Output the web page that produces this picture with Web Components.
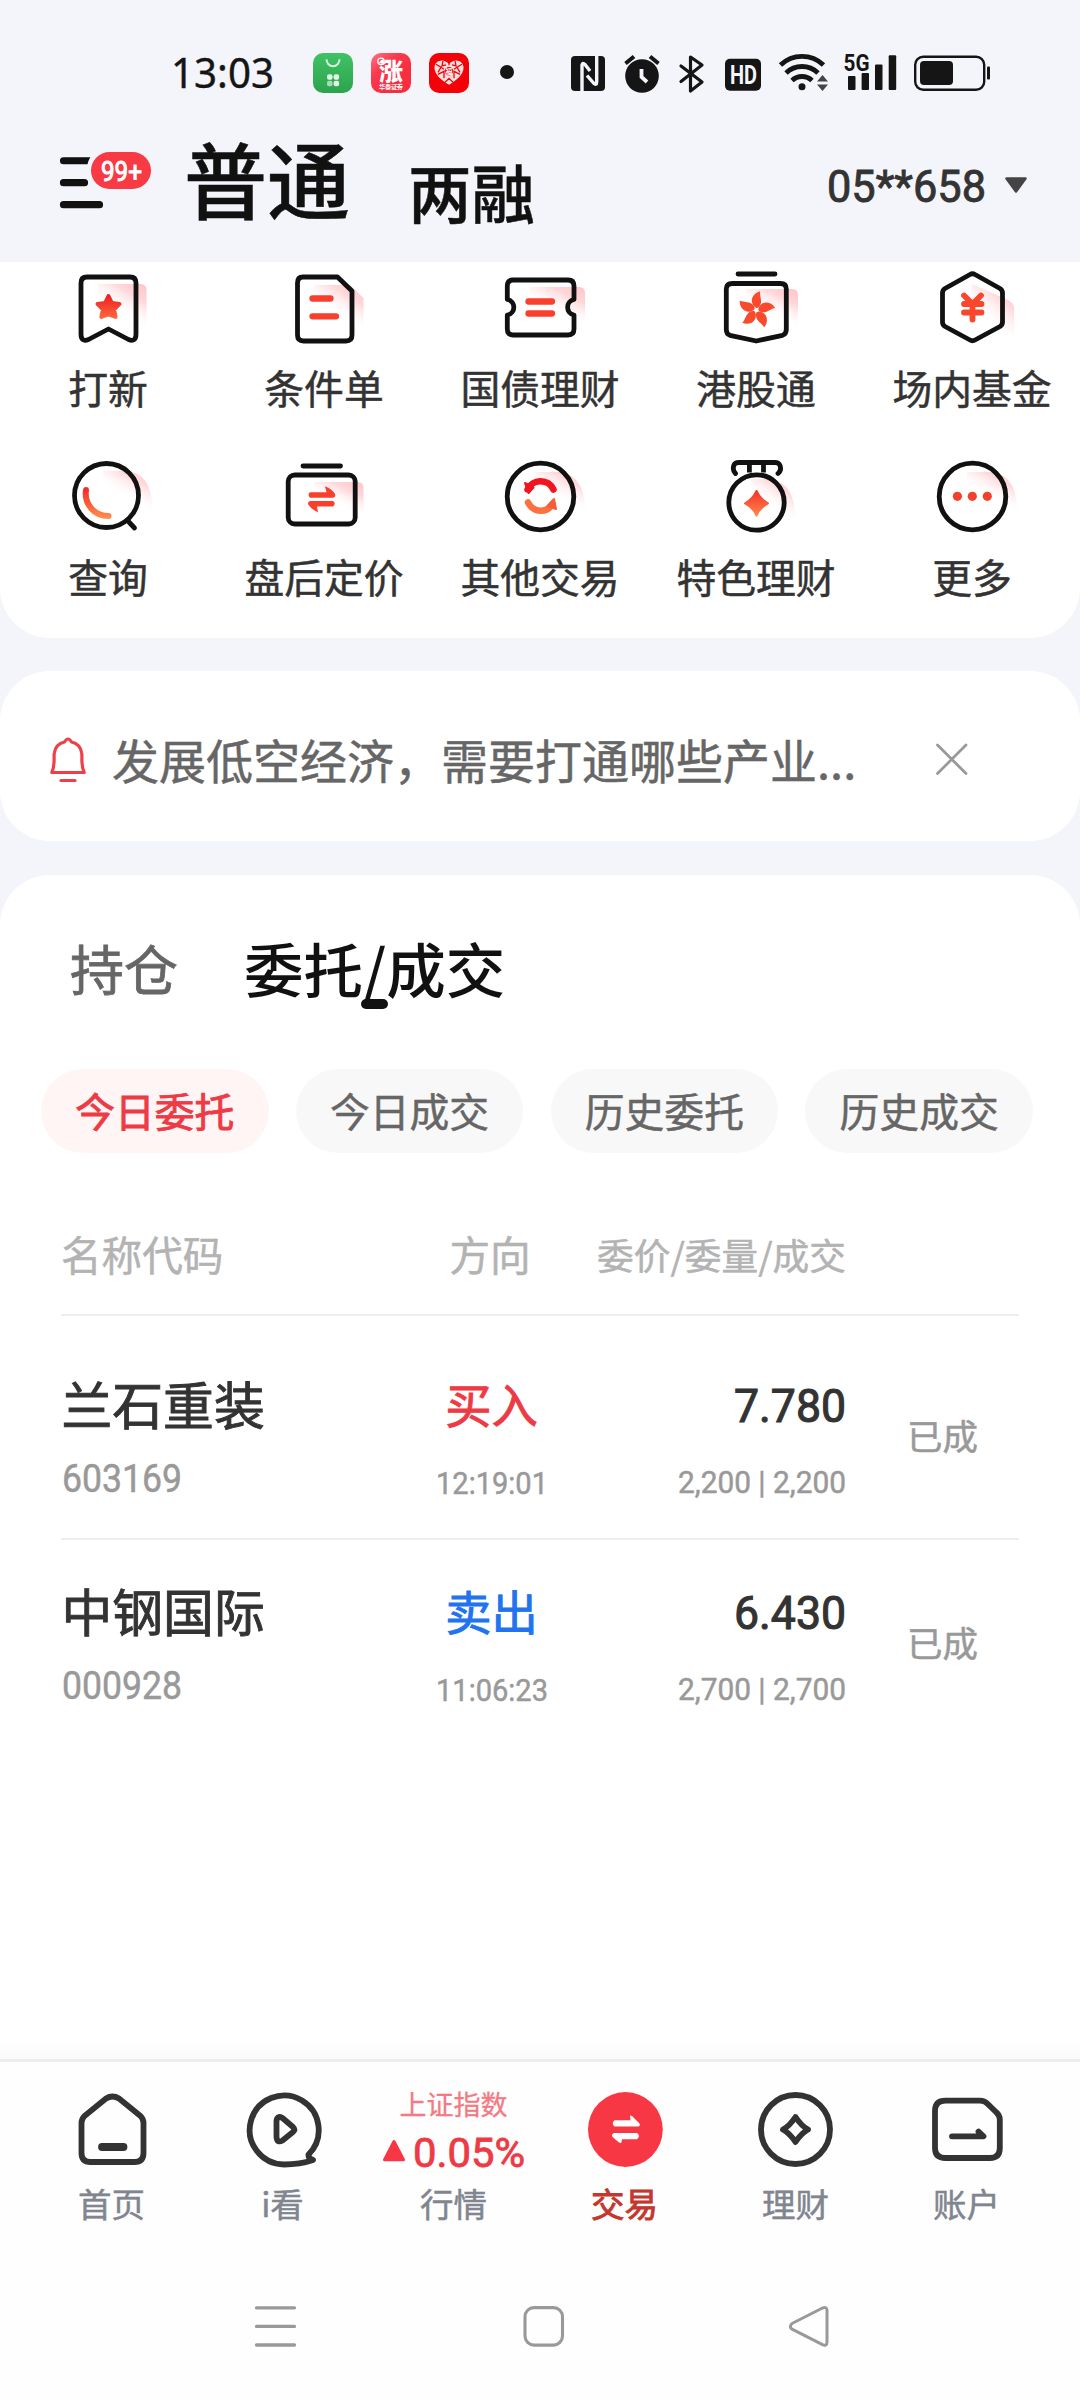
<!DOCTYPE html>
<html lang="zh-CN">
<head>
<meta charset="utf-8">
<title>交易</title>
<style>
html,body{margin:0;padding:0;background:#fff}
body{width:1080px;height:2400px;overflow:hidden;font-family:"Noto Sans CJK SC",sans-serif;color:#333}
</style>
</head>
<body>
<trade-app></trade-app>
<script>
const K = '#111';
const RED = 'url(#r)';
const defs = `<defs>
<linearGradient id="r" x1="0" y1="28" x2="0" y2="66" gradientUnits="userSpaceOnUse"><stop offset="0" stop-color="#ef0b1c"/><stop offset="1" stop-color="#ff8a4a"/></linearGradient>
<linearGradient id="s" x1="1" y1="0" x2=".3" y2="1"><stop offset="0" stop-color="#ffc3c7"/><stop offset=".3" stop-color="#ffd3d6" stop-opacity=".9"/><stop offset=".72" stop-color="#fff" stop-opacity="0"/></linearGradient></defs>`;
const line = (b, w = 4.8, c = K) => `<g fill="none" stroke="${c}" stroke-width="${w}" stroke-linecap="round" stroke-linejoin="round">${b}</g>`;
const shade = (x, y, x2, h, r = 6) => `<path fill="url(#s)" d="M40 ${y}H${x2 - r}Q${x2} ${y} ${x2} ${y + r}V${y + h}H40Z"/>`;
const petal = [0,72,144,216,288].map(a => `<path transform="rotate(${a + 8} 50.3 48)" d="M50 46C42 42.500 43 32.500 51.500 29C51 33.500 57 40 51.700 45.500Z"/>`).join('');

/* name: [x, y, width, height, markup] */
const ICONS = {
  mall: [313,52.7,40,40,`<defs><linearGradient id="g" x1="0" y1="0" x2="0" y2="1"><stop offset="0" stop-color="#41c265"/><stop offset="1" stop-color="#2ba44d"/></linearGradient></defs><rect x="313" y="52.7" width="40" height="40" rx="10" fill="url(#g)"/><path d="M326.500 59a6.500 7 0 0 0 13 0" fill="none" stroke="#d3f5dc" stroke-width="2"/><g fill="#e4f8e8"><rect x="327" y="74" width="5.5" height="5.5" rx="2"/><rect x="333.600" y="74" width="5.500" height="5.500" rx="2"/><rect x="327" y="80.500" width="5.500" height="5.500" rx="2" opacity=".65"/><rect x="333.600" y="80.500" width="5.500" height="5.500" rx="2"/></g>`],
  rise: [371,52.7,40,40,`<defs><linearGradient id="g" x1="0" y1="0" x2=".6" y2=".7"><stop offset="0" stop-color="#ff7484"/><stop offset=".5" stop-color="#f93a4d"/><stop offset="1" stop-color="#f72e40"/></linearGradient></defs><rect x="371" y="52.700" width="40" height="40" rx="10" fill="url(#g)"/><text x="379" y="79.500" font-size="24" font-weight="900" fill="#fff">涨</text><circle cx="381" cy="61" r="3.200" fill="none" stroke="#fff" stroke-width="1.400"/><path d="M379.500 62.500l3-3" stroke="#fff" stroke-width="1.200"/><text x="379" y="89" font-size="6.200" font-weight="700" fill="#fff" textLength="24">华泰证券</text>`],
  heart: [429,52.7,40,40,`<rect x="429" y="52.700" width="40" height="40" rx="10" fill="#f40009"/><path d="M449 84.500C441 80 434.500 74 434.500 67.500C434.500 60 444 57.500 449 64C454 57.500 463.500 60 463.500 67.500C463.500 74 457 80 449 84.500Z" fill="#ffe1df"/><path d="M436 64l5 3-3 5M443 60.500l-1 5 4-1M438 74l6-3v7M462 64l-5 3 3 5M455 60.500l1 5-4-1M460 74l-6-3v7M445 82l4-4 4 4M449 65v-2M441 67l3 2M457 67l-3 2" stroke="#f40009" stroke-width="1.300" fill="none"/><circle cx="449" cy="71" r="4.200" fill="#f40009"/><text x="449" y="73.700" font-size="7" font-weight="700" text-anchor="middle" fill="#fff">福</text>`],
  nfc: [571,52,34,41,`<rect x="571" y="56" width="34" height="35" rx="4" fill="#151515"/><g stroke="#f4f5fa" stroke-width="3.400" fill="none" stroke-linejoin="round"><path d="M582 91V65Q582.500 62 585 64.500L590 71"/><path d="M587 75.500L593.500 83Q596.700 86 596.700 82V56"/></g>`],
  alarm: [624,52,36,42,`<circle cx="642" cy="76" r="16.800" fill="#151515"/><path d="M625.500 63.500l8.500-7M658.500 63.500l-8.500-7" stroke="#151515" stroke-width="4" fill="none"/><path d="M641.500 69v8l5.500 5" stroke="#f4f5fa" stroke-width="3.800" fill="none"/>`],
  bt: [679,52,26,42,`<path d="M681 66l21 16-11.500 9V57L702 65 681 81.500" fill="none" stroke="#151515" stroke-width="3.200" stroke-linecap="round" stroke-linejoin="round"/>`],
  hd: [725,52,37,42,`<rect x="725" y="58.800" width="36" height="32" rx="5" fill="#151515"/><text x="730" y="84" font-family="Roboto" font-weight="700" font-size="25.500" textLength="27" lengthAdjust="spacingAndGlyphs" fill="#f4f5fa">HD</text>`],
  wifi: [778,51,52,42,`<g fill="none" stroke="#151515" stroke-width="4.800"><path d="M780.500 65a31 31 0 0 1 43 0"/><path d="M786 73a23 23 0 0 1 32 0"/><path d="M792 80.500a14.500 14.500 0 0 1 20 0"/></g><circle cx="802" cy="86.700" r="3.500" fill="#151515"/><path d="M817 81.500h11l-5.500-6.500zM817 84.500h11l-5.500 6.500z" fill="#444"/>`],
  cell: [843,51,55,42,`<text x="843.500" y="70.500" font-family="Roboto" font-weight="700" font-size="24.500" textLength="26" lengthAdjust="spacingAndGlyphs" fill="#151515">5G</text><g fill="#151515"><rect x="848" y="76" width="7.500" height="14" rx="1"/><rect x="861.600" y="73" width="7.400" height="17" rx="1"/><rect x="875" y="64.500" width="7.500" height="25.500" rx="1"/><rect x="888.700" y="55.300" width="7.500" height="34.700" rx="1"/></g>`],
  battery: [914,52,77,42,`<rect x="915.200" y="56.700" width="69" height="33" rx="8" fill="none" stroke="#151515" stroke-width="2.400"/><rect x="920" y="61" width="33" height="24" rx="4" fill="#151515"/><rect x="987" y="66.500" width="3" height="13" rx="1" fill="#151515"/>`],
  burger: [58,150,50,64,line('<path d="M63.500 182.700H84.500M63.500 204.700H99.500"/>',7.2)+`<path fill="#111" d="M63.500 157.200H90.300Q88.300 160.500 87.500 164.300H63.500A3.500 3.500 0 0 1 63.500 157.200Z"/>`],
  caret: [1005,177,22,17,`<path d="M1006.500 178.500H1025.500L1016 191.500Z" fill="#444" stroke="#444" stroke-width="2.500" stroke-linejoin="round"/>`],

  ipo: [0,0,100,90,defs+shade(40,22,88.5,44)+line('<path d="M29 15H72Q78 15 78 21V72Q78 80.500 70.500 77.500L50.500 67 30.500 77.500Q23 80.500 23 72V21Q23 15 29 15Z"/>')+`<path fill="${RED}" stroke="${RED}" stroke-width="4" stroke-linejoin="round" d="M50.500 34l3.400 7 7.600.900-5.500 5.600 1.600 7.500-7.100-2.700-7.100 2.700 1.600-7.500-5.500-5.600 7.600-.900z"/>`],
  cond: [0,0,100,90,defs+`<path fill="url(#s)" d="M40 23H76L89.500 36V68H40Z"/>`+line('<path d="M29 15H63.500L78 29V73Q78 79 72 79H29.500Q23.500 79 23.500 73V21Q23.500 15 29 15Z"/>')+line('<path d="M38.500 36.500H56.500M38.500 54.300H62"/>',6.3,'#f8402d')],
  bond: [0,0,100,90,defs+shade(40,25,95,38)+line('<path d="M23 18H78Q84 18 84 24V37.500C75.500 39 75.500 51.500 84 53V67Q84 73 78 73H23Q17.300 73 17.300 67V53C26 51.500 26 39 17.300 37.500V24Q17.300 18 23 18Z"/>')+line('<path d="M38.500 39.500H62M38.500 51.500H62"/>',6.3,'#f8402d')],
  hk: [0,0,100,90,defs+shade(40,27,92,38)+line('<path d="M32 12H69M26.500 21.500H74.500Q80.300 21.500 80.300 27V67.500Q80.300 72 76.500 73.300L50.300 79 24 73.300Q20.300 72 20.300 67.500V27Q20.300 21.500 26.500 21.500Z"/>')+`<g fill="#fa4a2e">${petal}</g>`],
  fund: [0,0,100,90,defs+`<path fill="url(#s)" d="M50 22L86 38Q92 41 92 46V80H45Z"/>`+line('<path d="M48 12.500Q50.500 11 53 12.500L78 26.500Q80.500 28 80.500 31V60Q80.500 63 78 64.500L53 78Q50.500 79.500 48 78L23 64.500Q20.500 63 20.500 60V31Q20.500 28 23 26.500Z"/>')+line('<path d="M42 33.500L50.500 42 59 33.500M42 42H59.500M42 50.500H59.500M50.500 42V57.500"/>',5.8,'#f9472e')],
  query: [0,0,100,90,defs+`<path fill="url(#s)" d="M60 20Q94.500 16 94.500 60H45V20Z"/>`+line('<circle cx="48.500" cy="44.500" r="32"/><path d="M69.500 69.500L76.500 77"/>')+`<path d="M28 39C26 53 36 65 50.500 65" stroke="${RED}" fill="none" stroke-width="6" stroke-linecap="round"/>`],
  after: [0,0,100,90,defs+shade(40,31,89.5,34)+line('<path d="M29 15H66.500"/><rect x="14.200" y="24" width="67" height="49" rx="6.500"/>')+`<path fill="#f8402d" d="M36 41.300H52.500L51 35.300Q58 38 61 43Q62 46.300 59 46.700H36Q33 44 36 41.300ZM59 50H36Q33 51 34.500 54Q38 58.500 44 61.500L43 55.400H59Q62.500 52.500 59 50Z"/>`],
  other: [0,0,100,90,defs+`<path fill="url(#s)" d="M60 21Q95 18 95 60H45V21Z"/>`+line('<circle cx="50.500" cy="45.500" r="33.300"/>')+`<g fill="none" stroke-width="6.500"><path stroke="#f21420" stroke-linecap="round" d="M37.500 38.500C42 28 58 27 63.500 38.500"/><path stroke="#fd7040" stroke-linecap="round" d="M38 51.500C43.500 62 57 62.500 62.500 53"/></g><path fill="#f21420" stroke="#f21420" stroke-width="2" stroke-linejoin="round" d="M35 32L38.500 42 43.500 36.500Z"/><path fill="#fa5c38" stroke="#fa5c38" stroke-width="2" stroke-linejoin="round" d="M66 58L64 48 57.500 55Z"/>`],
  wealth: [0,0,100,90,defs+`<path fill="url(#s)" d="M60 28Q89.500 28 89.500 70H45V28Z"/>`+line('<circle cx="50.500" cy="51.500" r="27.700"/><path d="M29.500 22.500Q26 19 28 14Q29 11.500 33 11.500H69Q72.500 11.500 73.800 14Q76 19 72 22.500"/><path stroke-linecap="butt" d="M43.400 12V21.500M57.500 12V21.500"/>')+`<path fill="${RED}" stroke="${RED}" stroke-width="2" stroke-linejoin="round" d="M50.500 40Q54 48 62 52.300Q54 56.500 50.500 64.500Q47 56.500 39 52.300Q47 48 50.500 40Z"/>`],
  more: [0,0,100,90,defs+`<path fill="url(#s)" d="M60 21Q95 18 95 60H45V21Z"/>`+line('<circle cx="50.500" cy="45.500" r="33.300"/>')+`<g fill="#f5402b"><circle cx="35.400" cy="45.300" r="4.600"/><circle cx="50.300" cy="45.300" r="4.600"/><circle cx="65.300" cy="45.300" r="4.600"/></g>`],

  bell: [48,734,42,52,line('<path d="M51.800 773.500C55.500 766 53.500 758 54.300 754C55.500 747 60 744 64.500 743Q68 737 71.500 743C76 744 80.500 747 81.700 754C82.500 758 80.500 766 84.200 773.500Z"/><path d="M61 781.500H75"/>',3.2,'#ee4049')],
  close: [933,743,36,34,line('<path d="M936.500 746L965 774.500M965 746L936.500 774.500"/>',2.8,'#999')],

  home: [72,2088,80,84,line('<path d="M106 2098.500Q112.500 2094.500 119 2098.500L140.500 2116Q143.500 2119 143.500 2123V2153Q143.500 2162 134.500 2162H90.500Q81.500 2162 81.500 2153V2123Q81.500 2119 84.500 2116Z"/>',5.800,'#333')+line('<path d="M102 2147H123.500"/>',7.8,'#333')],
  look: [243,2088,80,84,line('<path d="M284 2164.500A34.500 34.500 0 1 1 308.500 2154.500Q308 2158 313 2160Q300 2164.500 284 2164.500Z"/><path d="M276.500 2121V2137Q277 2143.500 282.500 2140.500L293 2132Q295.500 2129.500 293 2127L282.500 2118Q277 2115 276.500 2121Z"/>',5.800,'#333')],
  up: [384,2140,22,21.5,`<path d="M395 2141.500L404.500 2159.800H385.500Z" fill="#f73844" stroke="#f73844" stroke-width="3" stroke-linejoin="round"/>`],
  trade: [585,2088,80,84,`<circle cx="625.400" cy="2129.500" r="37.400" fill="#f73744"/><path fill="#fff" d="M614.500 2120.300H630.500L630 2116Q630.500 2115 632 2116L639.500 2123.500Q640.500 2126.500 638 2126.500H614.500Q611 2123.500 614.500 2120.300ZM637 2133H614Q611 2134 612.500 2137L619 2142.500Q621.500 2143.500 621.500 2142L622 2139.200H637Q641 2136 637 2133Z"/>`],
  money: [757,2088,80,84,line('<circle cx="796.500" cy="2129.500" r="34.500"/><path d="M796.500 2117Q802.500 2126 809 2129.500Q802.500 2133 796.500 2142Q790.500 2133 784 2129.500Q790.500 2126 796.500 2117Z"/>',5.800,'#333')],
  account: [927,2088,80,84,line('<path d="M945.500 2100.700H980Q984.500 2100.700 987.500 2103.700L996.500 2112.500Q999.800 2115.500 999.800 2119.500V2148Q999.800 2158 990 2158H945.500Q935 2158 935 2148V2111Q935 2100.700 945.500 2100.700Z"/><path d="M952 2136.300H982L978.500 2131.500 983.500 2136.300Z"/>',5.800,'#333')],
  recent: [255,2304,41,43,line('<path d="M256.500 2306.800H294.500M256.500 2325.400H294.500M256.500 2344H294.500"/>',3.300,'#999')],
  square: [522,2304,44,43,line('<rect x="525" y="2306.600" width="37.500" height="37.500" rx="9"/>',3.100,'#999')],
  back: [788,2303,42,45,line('<path d="M792 2322.500L822.500 2307Q827 2305.300 827 2309.500V2341Q827 2345.500 822.500 2343.700L792 2328.200Q788.800 2325.500 792 2322.500Z"/>',3,'#999')]
};

function define(name, render) {
  customElements.define(name, class extends HTMLElement {
    connectedCallback() {
      if (!this.shadowRoot) this.attachShadow({mode: 'open'}).innerHTML = render(this);
    }
  });
}

define('ui-icon', el => {
  const [x, y, w, h, body] = ICONS[el.getAttribute('name')];
  return `<style>:host{display:block;flex:none;width:${w}px;height:${h}px;-webkit-text-stroke:0}svg{display:block;overflow:visible}</style>
  <svg width="${w}" height="${h}" viewBox="${x} ${y} ${w} ${h}">${body}</svg>`;
});

/* Narrow numeral text; the box is as tall as its capitals. */
define('num-text', el => {
  const w = +el.getAttribute('w'), c = +el.getAttribute('cap');
  return `<style>:host{display:block;flex:none;width:${w}px;height:${c}px;-webkit-text-stroke:0}svg{display:block;overflow:visible}
  text{font-family:${el.getAttribute('face') || 'Roboto'},sans-serif;fill:currentColor;stroke:currentColor;stroke-width:var(--bold,.5px);font-weight:400}</style>
  <svg width="${w}" height="${c}"><text x="0" y="${c}" font-size="${c / .711}" textLength="${w}" lengthAdjust="spacingAndGlyphs">${el.getAttribute('text')}</text></svg>`;
});

define('status-bar', () => `<style>
:host{display:flex;height:100px;box-sizing:border-box;padding:52px 0 0 171px;color:#151515;align-items:flex-start}
num-text{margin:5.500px 39px 0 0;--bold:.4px}
.apps{display:flex;gap:18px;padding-top:.7px}
.dot{width:14px;height:14px;border-radius:7px;background:#151515;margin:13px 57px 0 31px}
.sys{display:flex}
</style>
<num-text text="13:03" w="103" cap="30" face="'Noto Sans'"></num-text>
<div class="apps"><ui-icon name="mall"></ui-icon><ui-icon name="rise"></ui-icon><ui-icon name="heart"></ui-icon></div>
<div class="dot"></div>
<div class="sys"><ui-icon name="nfc"></ui-icon><ui-icon name="alarm" style="margin-left:19px"></ui-icon><ui-icon name="bt" style="margin-left:19px"></ui-icon><ui-icon name="hd" style="margin-left:20px"></ui-icon><ui-icon name="wifi" style="margin:-1px 0 0 16px"></ui-icon><ui-icon name="cell" style="margin:-1px 0 0 13px"></ui-icon><ui-icon name="battery" style="margin-left:16px"></ui-icon></div>`);

define('app-header', () => `<style>
:host{display:flex;height:162px;box-sizing:border-box;padding-left:58px;color:#111}
.menu{position:relative;margin-top:50px;width:126px;flex:none}
.badge{position:absolute;left:33px;top:2px;width:60px;height:37px;border-radius:18.500px;background:#f73a44;color:#fff;display:flex;align-items:center;justify-content:center;--bold:1px}
.a{font-size:83px;line-height:100px;font-weight:500;margin-top:27px;width:224px}
.b{font-size:63.500px;line-height:80px;font-weight:500;margin-top:50px;width:419px}
.acct{display:flex;color:#333;gap:19px;margin-top:69.500px;--bold:.9px}
.acct ui-icon{margin-top:7px}
</style>
<div class="menu"><ui-icon name="burger"></ui-icon><div class="badge"><num-text text="99+" w="41" cap="19.5"></num-text></div></div>
<div class="a">普通</div><div class="b">两融</div>
<div class="acct"><num-text text="05**658" w="159" cap="31.5"></num-text><ui-icon name="caret"></ui-icon></div>`);

define('service-item', el => `<style>
:host{display:flex;flex-direction:column;align-items:center;height:189px;font-size:39.800px;line-height:48px;white-space:nowrap}
span{margin-top:11px}
</style><ui-icon name="${el.getAttribute('icon')}"></ui-icon><span><slot></slot></span>`);

define('service-grid', () => `<style>
:host{display:grid;grid-template-columns:repeat(5,216px);height:376px;background:#fff;border-radius:0 0 50px 50px;overflow:hidden;color:#333}
</style>` + [['ipo','打新'],['cond','条件单'],['bond','国债理财'],['hk','港股通'],['fund','场内基金'],['query','查询'],['after','盘后定价'],['other','其他交易'],['wealth','特色理财'],['more','更多']]
  .map(([i, t]) => `<service-item icon="${i}">${t}</service-item>`).join(''));

define('notice-bar', () => `<style>
:host{display:flex;align-items:center;height:170px;margin-top:33px;background:#fff;border-radius:50px;box-sizing:border-box;padding:6px 0 0 48px;color:#666;font-size:47px;line-height:60px;white-space:nowrap}
span{width:822px;margin-left:22px}
</style><ui-icon name="bell"></ui-icon><span><slot></slot></span><ui-icon name="close"></ui-icon>`);

define('filter-chip', el => `<style>
:host{display:flex;align-items:center;justify-content:center;width:227.500px;height:84px;box-sizing:border-box;padding-bottom:3px;border-radius:42px;background:#f8f8f8;color:#666;font-size:39.800px;line-height:50px;white-space:nowrap}
:host([active]){background:#fff5f4;color:#ee3a44;-webkit-text-stroke-width:.9px}
</style><slot></slot>`);

const cols = 'display:grid;grid-template-columns:331px 200px 253px 174px';
define('order-row', el => {
  const a = n => el.getAttribute(n);
  return `<style>
:host{${cols};height:207px;box-sizing:border-box;white-space:nowrap;border-bottom:2px solid var(--rule,#eee);color:#999}
div{display:flex;flex-direction:column;padding-top:40px}
.name{font-size:50.800px;line-height:60px;color:#333;-webkit-text-stroke-width:.9px}
.dir{font-size:46.300px;line-height:60px;color:${a('side') === '买入' ? '#ee3a44' : '#2173ee'};-webkit-text-stroke-width:.9px}
.n{padding-left:.5px}.d{align-items:center;padding-right:1px}.p{align-items:flex-end;padding-top:54.500px}
.p num-text:first-child{color:#333;--bold:1.1px}
.p num-text{margin-right:-1px}
.s{font-size:35.500px;line-height:40px;padding:82px 0 0 62px}
</style>
<div class="n"><span class="name">${a('name')}</span><num-text text="${a('code')}" w="120" cap="27.500" style="margin-top:31px"></num-text></div>
<div class="d"><span class="dir">${a('side')}</span><num-text text="${a('time')}" w="112" cap="22" style="margin-top:38.500px"></num-text></div>
<div class="p"><num-text text="${a('price')}" w="112" cap="33.5"></num-text><num-text text="${a('volume')}" w="168" cap="22" style="margin-top:50px"></num-text></div>
<div class="s">已成</div>`;
});

define('orders-panel', () => `<style>
:host{display:block;flex:1;margin-top:34px;background:#fff;border-radius:50px 50px 0 0;padding:0 61px}
.tabs{display:flex;height:194px;box-sizing:border-box;padding-top:52px;white-space:nowrap}
.t1{font-size:54px;line-height:80px;color:#666;margin:1px 0 0 9px;width:174px;-webkit-text-stroke-width:.8px}
.t2{font-size:59.500px;line-height:80px;color:#111;font-weight:500;-webkit-text-stroke:0;position:relative;height:80px}
.t2:after{content:"";position:absolute;left:117px;top:72px;width:27px;height:10px;border-radius:5px;background:#111}
.chips{display:flex;gap:27.300px;margin:0 -20px}
.head{${cols};height:163px;box-sizing:border-box;border-bottom:2px solid #eee;color:#b3b3b3;font-size:40.600px;line-height:50px;padding-top:76px;white-space:nowrap;margin-bottom:17px}
.head :nth-child(2){text-align:center;padding-right:4px}.head :nth-child(3){text-align:right;font-size:36.700px;margin-right:-1px}
</style>
<div class="tabs"><div class="t1">持仓</div><div class="t2">委托/成交</div></div>
<div class="chips"><filter-chip active>今日委托</filter-chip><filter-chip>今日成交</filter-chip><filter-chip>历史委托</filter-chip><filter-chip>历史成交</filter-chip></div>
<div class="head"><span>名称代码</span><span>方向</span><span>委价/委量/成交</span></div>
<order-row name="兰石重装" code="603169" side="买入" time="12:19:01" price="7.780" volume="2,200 | 2,200"></order-row>
<order-row style="--rule:transparent" name="中钢国际" code="000928" side="卖出" time="11:06:23" price="6.430" volume="2,700 | 2,700"></order-row>`);

define('nav-item', el => `<style>
:host{display:flex;flex-direction:column;align-items:center;width:171px;color:#80858f;font-size:33.500px;line-height:40px}
:host([active]){color:#c4372f;-webkit-text-stroke-width:.9px}
.top{height:84px}
.label{margin-top:11px}
</style><div class="top">${el.hasAttribute('icon') ? `<ui-icon name="${el.getAttribute('icon')}"></ui-icon>` : '<slot name="top"></slot>'}</div><div class="label"><slot></slot></div>`);

define('index-ticker', () => `<style>
:host{display:flex;flex-direction:column;align-items:center;color:#f37a82;font-size:27px;line-height:32px;-webkit-text-stroke-width:.3px}
.v{display:flex;gap:8px;margin-top:18px;color:#ee3a44;--bold:.8px}
ui-icon{margin-top:2px}
</style><div>上证指数</div><div class="v"><ui-icon name="up"></ui-icon><num-text text="0.05%" w="112" cap="29"></num-text></div>`);

define('bottom-nav', () => `<style>
:host{display:block;height:360px;flex:none;background:#fefefe}
.fade{height:19px;background:linear-gradient(#fff,#fafafa);border-bottom:3px solid #eee}
.tabs{display:flex;padding:26px 28px 0 26px}
.sys{display:flex;align-items:center;height:45px;padding:81px 0 0 255px}
</style>
<div class="fade"></div>
<div class="tabs"><nav-item icon="home">首页</nav-item><nav-item icon="look">i看</nav-item><nav-item><index-ticker slot="top"></index-ticker>行情</nav-item><nav-item icon="trade" active>交易</nav-item><nav-item icon="money">理财</nav-item><nav-item icon="account">账户</nav-item></div>
<div class="sys"><ui-icon name="recent"></ui-icon><ui-icon name="square" style="margin-left:226px"></ui-icon><ui-icon name="back" style="margin-left:222px"></ui-icon></div>`);

define('trade-app', () => `<style>
:host{display:flex;flex-direction:column;width:1080px;height:2400px;background:#f4f5fa;-webkit-text-stroke-width:.5px}
</style>
<status-bar></status-bar><app-header></app-header><service-grid></service-grid>
<notice-bar>发展低空经济，需要打通哪些产业...</notice-bar>
<orders-panel></orders-panel><bottom-nav></bottom-nav>`);
</script>
</body>
</html>
